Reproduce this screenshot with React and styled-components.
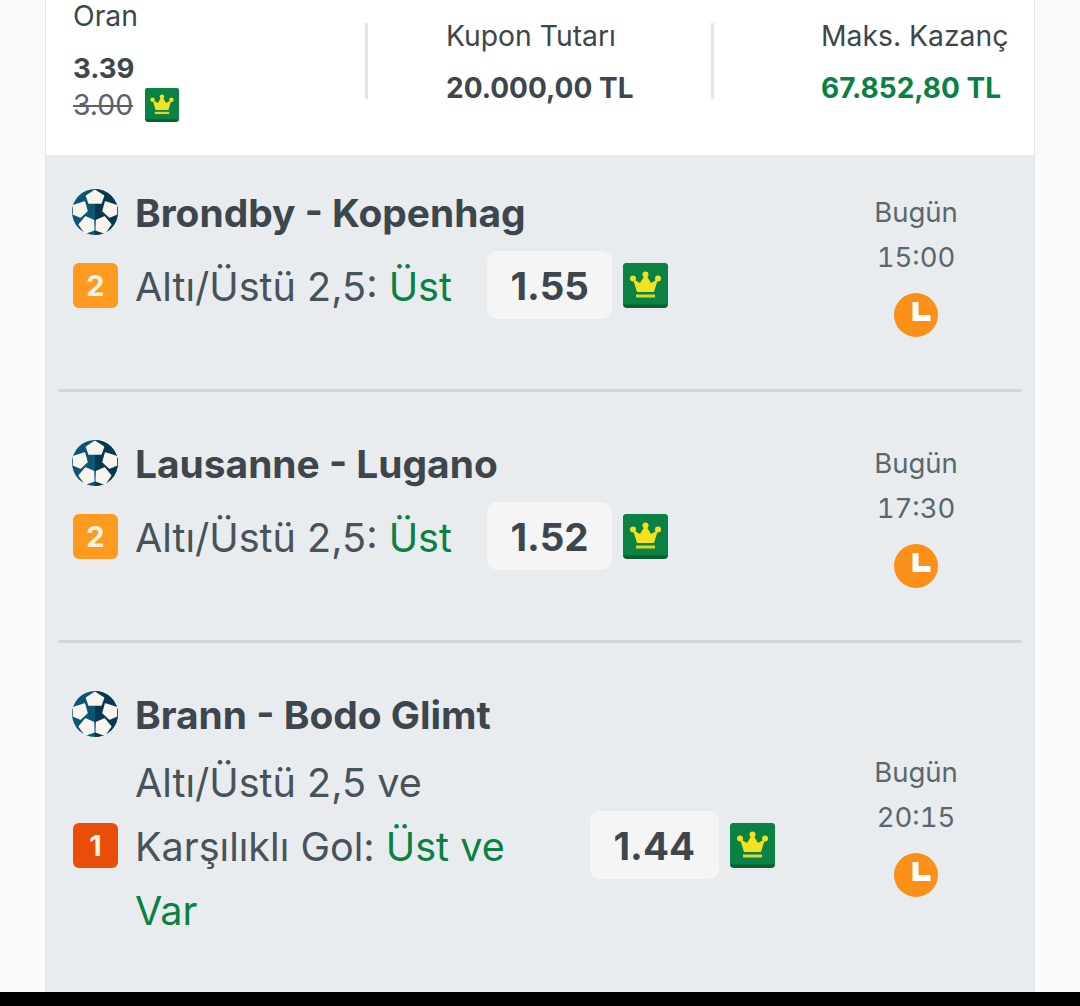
import React from "react";
import styled, { createGlobalStyle } from "styled-components";

const GlobalStyle = createGlobalStyle`
  html, body {
    margin: 0;
    padding: 0;
    background: #fafafa;
  }
  body {
    font-family: Inter, "Noto Sans", "Liberation Sans", sans-serif;
    color: #3d464c;
  }
`;

const matches = [
  {
    title: "Brondby - Kopenhag",
    level: 2,
    market: "Altı/Üstü 2,5: ",
    pick: "Üst",
    odds: "1.55",
    time: "15:00",
  },
  {
    title: "Lausanne - Lugano",
    level: 2,
    market: "Altı/Üstü 2,5: ",
    pick: "Üst",
    odds: "1.52",
    time: "17:30",
  },
  {
    title: "Brann - Bodo Glimt",
    level: 1,
    market: "Altı/Üstü 2,5 ve Karşılıklı Gol: ",
    pick: "Üst ve Var",
    odds: "1.44",
    time: "20:15",
  },
];

const Crown = ({ size }) => (
  <CrownSvg width={size} height={size} viewBox="0 0 45 45">
    <rect width="45" height="45" rx="4" fill="#06602f" />
    <path d="M4 0h37a4 4 0 0 1 4 4v37.500H0V4a4 4 0 0 1 4-4z" fill="#0a8243" />
    <circle cx="22.500" cy="11.500" r="3" fill="#f4e21f" />
    <circle cx="10" cy="15.500" r="3" fill="#f4e21f" />
    <circle cx="35" cy="15.500" r="3" fill="#f4e21f" />
    <path d="M10 16l4 13h17l4-13-7 4-5.500-9-5.500 9z" fill="#f4e21f" />
    <rect x="13" y="31.500" width="19" height="3" fill="#d9d72e" />
  </CrownSvg>
);

const Ball = () => (
  <BallSvg width="46" height="46" viewBox="0 0 46 46">
    <circle cx="23" cy="23" r="23" fill="#0b5673" />
    <path d="M23 0a23 23 0 0 1 0 46z" fill="#07384e" />
    <g fill="#f8f4ef" stroke="#f8f4ef" strokeWidth="1.500" strokeLinejoin="round">
      <path d="M23 1.500l8.500 5.500-2.500 7h-12l-2.500-7z" />
      <path d="M12.500 13l2.500 9-6.500 6-7-3 .3-8.500z" />
      <path d="M33.500 13l-2.500 9 6.500 6 7-3-.3-8.500z" />
      <path d="M13.500 28l8 3.500.3 9.500-8.500 3-6-8.500z" />
      <path d="M32.500 28l-8 3.500-.3 9.500 8.500 3 6-8.500z" />
    </g>
  </BallSvg>
);

const Clock = () => (
  <svg width="44" height="44" viewBox="0 0 44 44">
    <circle cx="22" cy="22" r="22" fill="#fb9018" />
    <path d="M18.500 9h6v13h12v6h-18z" fill="#fff" />
  </svg>
);

const App = () => {
  return (
    <Page>
      <GlobalStyle />
      <Card>
        <Summary>
          <OddsColumn>
            <OddsLabel>Oran</OddsLabel>
            <OddsValue>3.39</OddsValue>
            <OldOddsRow>
              <OldOdds>3.00</OldOdds>
              <Crown size={34} />
            </OldOddsRow>
          </OddsColumn>
          <StakeColumn>
            <SummaryLabel>Kupon Tutarı</SummaryLabel>
            <SummaryValue>20.000,00 TL</SummaryValue>
          </StakeColumn>
          <WinColumn>
            <SummaryLabel>Maks. Kazanç</SummaryLabel>
            <SummaryValue $green>67.852,80 TL</SummaryValue>
          </WinColumn>
        </Summary>
        {matches.map((match, index) => (
          <Match key={match.title} $last={index === matches.length - 1}>
            <MatchBody>
              <MatchMain>
                <TitleRow>
                  <Ball />
                  <Title>{match.title}</Title>
                </TitleRow>
                <SelectionRow>
                  <Level $level={match.level}>{match.level}</Level>
                  <Selection>
                    {match.market}
                    <Pick>{match.pick}</Pick>
                  </Selection>
                  <OddsPill>{match.odds}</OddsPill>
                  <Crown size={45} />
                </SelectionRow>
              </MatchMain>
              <TimeColumn $wrapped={match.level === 1}>
                <TimeText>Bugün</TimeText>
                <TimeText>{match.time}</TimeText>
                <ClockSlot>
                  <Clock />
                </ClockSlot>
              </TimeColumn>
            </MatchBody>
            {index < matches.length - 1 && <Divider />}
          </Match>
        ))}
      </Card>
      <BlackBar />
    </Page>
  );
};

const Page = styled.div`
  height: 1006px;
  display: flex;
  flex-direction: column;
  overflow: hidden;
`;

const Card = styled.main`
  flex: 1;
  width: 988px;
  margin-left: 46px;
  box-sizing: border-box;
  background: #e9ecef;
  box-shadow: -1px 0 0 #e6e6e6, 1px 0 0 #e6e6e6;
  display: flex;
  flex-direction: column;
  overflow: hidden;
`;

const Summary = styled.section`
  height: 155px;
  flex: none;
  background: #fff;
  display: flex;
  padding-left: 27px;
`;

const OddsColumn = styled.div`
  width: 292px;
  flex: none;
`;

const OddsLabel = styled.div`
  font-size: 28.3px;
  line-height: 32px;
`;

const OddsValue = styled.div`
  margin-top: 20px;
  font-size: 27.5px;
  line-height: 32px;
  font-weight: 700;
`;

const OldOddsRow = styled.div`
  display: flex;
  align-items: center;
  gap: 12px;
  margin-top: 3px;
  height: 36px;
`;

const OldOdds = styled.span`
  font-size: 28.3px;
  line-height: 32px;
  text-decoration: line-through;
  text-decoration-thickness: 2px;
  color: #59636a;
`;

const StakeColumn = styled.div`
  width: 349px;
  flex: none;
  box-sizing: border-box;
  height: 76px;
  margin-top: 23px;
  padding-left: 78px;
  border-left: 3px solid #e4e5e6;
  border-right: 3px solid #e4e5e6;
`;

const WinColumn = styled.div`
  flex: none;
  padding-left: 107px;
  margin-top: 23px;
`;

const SummaryLabel = styled.div`
  margin-top: -3px;
  font-size: 28.3px;
  line-height: 32px;
  white-space: nowrap;
`;

const SummaryValue = styled.div`
  margin-top: 20px;
  font-size: 28px;
  line-height: 32px;
  font-weight: 700;
  white-space: nowrap;
  color: ${(p) => (p.$green ? "#0a8043" : "#3d464c")};
`;

const Match = styled.article`
  flex: ${(p) => (p.$last ? "1" : "none")};
  height: ${(p) => (p.$last ? "auto" : "251px")};
  box-sizing: border-box;
  padding-top: 34px;
  display: flex;
  flex-direction: column;
`;

const MatchBody = styled.div`
  display: flex;
  padding-left: 26px;
`;

const Divider = styled.div`
  height: 3px;
  margin: auto 13px 14px;
  background: #d3d6d8;
`;

const MatchMain = styled.div`
  flex: none;
  width: 770px;
`;

const TitleRow = styled.div`
  display: flex;
  align-items: center;
  gap: 17px;
  height: 46px;
`;

const BallSvg = styled.svg`
  flex: none;
`;

const CrownSvg = styled.svg`
  flex: none;
`;

const Title = styled.h2`
  margin: 0;
  padding-top: 2px;
  font-size: 38.9px;
  line-height: 46px;
  font-weight: 700;
  white-space: nowrap;
`;

const SelectionRow = styled.div`
  margin-top: 12px;
  min-height: 76px;
  display: flex;
  align-items: center;
`;

const Level = styled.span`
  flex: none;
  width: 45px;
  height: 45px;
  margin: 0 17px 0 1px;
  border-radius: 6px;
  background: ${(p) => (p.$level === 1 ? "#e94d08" : "#fd9a1f")};
  color: #fff3e0;
  display: flex;
  align-items: center;
  justify-content: center;
  font-size: 29px;
  font-weight: 700;
`;

const Selection = styled.div`
  max-width: 420px;
  padding-top: 2px;
  margin-bottom: -2px;
  font-size: 39.6px;
  line-height: 64px;
  color: #48525a;
`;

const Pick = styled.span`
  color: #0a8043;
`;

const OddsPill = styled.div`
  flex: none;
  box-sizing: border-box;
  height: 68px;
  padding: 1px 23.5px 0;
  margin: 0 11px 0 35px;
  border-radius: 10px;
  background: #f5f5f6;
  display: flex;
  align-items: center;
  justify-content: center;
  font-size: 38.5px;
  font-weight: 700;
`;

const TimeColumn = styled.div`
  flex: none;
  width: 140px;
  margin-top: ${(p) => (p.$wrapped ? "59px" : "1px")};
  margin-left: 4px;
  display: flex;
  flex-direction: column;
  align-items: center;
`;

const TimeText = styled.div`
  font-size: 27.5px;
  line-height: 45px;
  font-variant-numeric: tabular-nums;
  color: #5a666e;
`;

const ClockSlot = styled.div`
  margin-top: 13px;
  height: 44px;
`;

const BlackBar = styled.div`
  flex: none;
  height: 14px;
  background: #000;
`;

export default App;
